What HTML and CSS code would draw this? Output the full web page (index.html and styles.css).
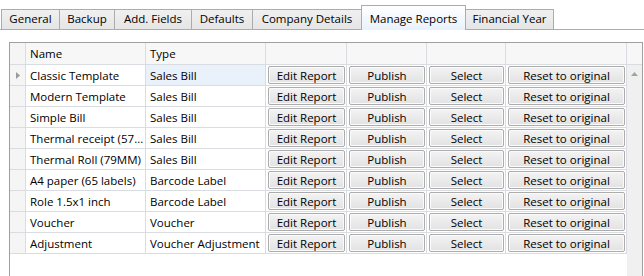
FILE: index.html
```html
<!DOCTYPE html>
<html lang="en">

<head>
    <meta charset="UTF-8">
    <title>Settings - Manage Reports</title>
    <link rel="stylesheet" href="styles.css">
</head>

<body>
    <div class="tabstrip">
        <div class="tab tab-general">General</div>
        <div class="tab tab-backup">Backup</div>
        <div class="tab tab-fields">Add. Fields</div>
        <div class="tab tab-defaults">Defaults</div>
        <div class="tab tab-company">Company Details</div>
        <div class="tab tab-reports active">Manage Reports</div>
        <div class="tab tab-year">Financial Year</div>
    </div>

    <div class="panel">
        <div class="grid-view">
            <div class="grid" id="reports">
                <div class="cell head rowhead"></div>
                <div class="cell head">Name</div>
                <div class="cell head">Type</div>
                <div class="cell head"></div>
                <div class="cell head"></div>
                <div class="cell head"></div>
                <div class="cell head"></div>
            </div>
            <div class="scroll">
                <div class="scroll-head"></div>
                <div class="scroll-track">
                    <svg class="arrow-up" width="7" height="4" viewBox="0 0 7 4"><polygon points="0,4 3.5,0 7,4" fill="#a3a3a3"/></svg>
                </div>
            </div>
        </div>
    </div>

    <script>
        const reports = [
            ['Classic Template', 'Sales Bill'],
            ['Modern Template', 'Sales Bill'],
            ['Simple Bill', 'Sales Bill'],
            ['Thermal receipt (57...', 'Sales Bill'],
            ['Thermal Roll (79MM)', 'Sales Bill'],
            ['A4 paper (65 labels)', 'Barcode Label'],
            ['Role 1.5x1 inch', 'Barcode Label'],
            ['Voucher', 'Voucher'],
            ['Adjustment', 'Voucher Adjustment']
        ];

        const grid = document.getElementById('reports');

        reports.forEach(function (row, i) {
            const current = i === 0;
            grid.innerHTML +=
                `<div class="cell rowhead">${current ? '<svg width="4" height="7" viewBox="0 0 4 7"><polygon points="0,0 4,3.5 0,7" fill="#9a9a9a"/></svg>' : ''}</div>
                <div class="cell">${row[0]}</div>
                <div class="cell${current ? ' current' : ''}">${row[1]}</div>
                <div class="cell btn-cell"><button>Edit Report</button></div>
                <div class="cell btn-cell"><button>Publish</button></div>
                <div class="cell btn-cell"><button>Select</button></div>
                <div class="cell btn-cell"><button>Reset to original</button></div>`;
        });
    </script>
</body>

</html>
```

FILE: styles.css
```css
body {
    font-family: "Open Sans", "Noto Sans", sans-serif;
    font-size: 11.5px;
    color: #000;
    background-color: white;
    margin: 0;
    padding: 0;
}

.tabstrip {
    display: flex;
    align-items: flex-end;
    height: 30px;
    box-sizing: border-box;
    padding-left: 1px;
    border-bottom: 1px solid #acacac;
}

.tab {
    height: 20px;
    box-sizing: border-box;
    margin-right: -1px;
    line-height: 18px;
    text-align: center;
    border: 1px solid #acacac;
    border-bottom: none;
    background: linear-gradient(#f0f0f0, #e5e5e5);
    white-space: nowrap;
}

/* tab widths as in the original dialog */
.tab-general { width: 59px; }
.tab-backup { width: 56px; }
.tab-fields { width: 78px; }
.tab-defaults { width: 62px; }
.tab-company { width: 110px; }
.tab-reports { width: 105px; }
.tab-year { width: 89px; }

.tab.active {
    position: relative;
    z-index: 1;
    height: 25px;
    margin-bottom: -1px;
    padding-top: 4px;
    background: linear-gradient(#ffffff, #e8f1fc);
}

.panel {
    padding: 12px 1px 0 9px;
}

.grid-view {
    display: flex;
    height: 234px;
    border: 1px solid #a0a0a0;
    border-bottom: none;
}

.grid {
    display: grid;
    grid-template-columns: 16px 120px 120px 81px 80px 79px 121px;
    grid-template-rows: 22px;
    grid-auto-rows: 21px;
    align-content: start;
}

.cell {
    box-sizing: border-box;
    border-right: 1px solid #d9dce0;
    border-bottom: 1px solid #d9dce0;
    padding: 1px 4px 0;
    line-height: 19px;
    white-space: nowrap;
    overflow: hidden;
}

.head {
    line-height: 20px;
    background-color: #f7f7f7;
}

.rowhead {
    padding: 0;
    background-color: #f5f5f5;
    display: flex;
    align-items: center;
    justify-content: center;
}

.current {
    background-color: #e9f1fb;
}

.btn-cell {
    padding: 1px 1px 1px 2px;
}

button {
    display: block;
    width: 100%;
    height: 100%;
    padding: 1px 0 0;
    font-family: inherit;
    font-size: inherit;
    color: #000;
    line-height: 16px;
    border: 1px solid #acacac;
    border-radius: 2px;
    background: linear-gradient(#f3f3f3, #e2e2e2);
    box-shadow: inset 0 0 0 1px #fbfbfb;
}

.scroll {
    flex: 1;
    display: flex;
    flex-direction: column;
}

.scroll-head {
    height: 22px;
    box-sizing: border-box;
    border-bottom: 1px solid #d9dce0;
    background-color: #f7f7f7;
}

.scroll-track {
    flex: 1;
    background-color: #f0f0f0;
    display: flex;
    justify-content: center;
    padding-top: 7px;
    box-sizing: border-box;
}

.arrow-up {
    display: block;
}
```
